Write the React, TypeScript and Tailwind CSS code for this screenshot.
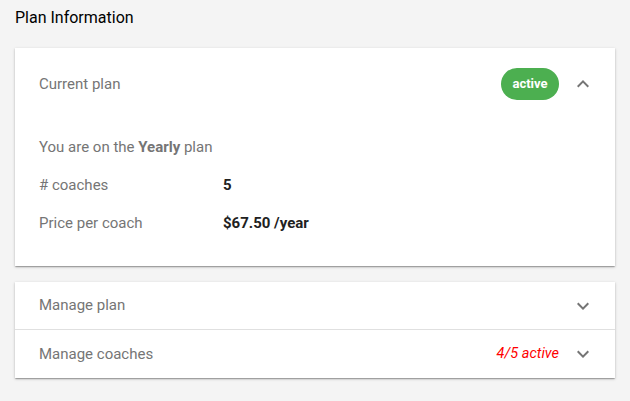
import React from "react";

const Chevron = ({ up }: { up?: boolean }) => (
  <svg width="24" height="24" viewBox="0 0 24 24" className="shrink-0" style={{ transform: up ? "none" : "rotate(180deg)" }}>
    <path d="M12 8l-6 6 1.41 1.41L12 10.83l4.59 4.58L18 14z" fill="#757575" />
  </svg>
);

const card = "bg-white shadow-[0_1px_3px_rgba(0,0,0,0.2),0_1px_1px_rgba(0,0,0,0.14),0_2px_1px_-1px_rgba(0,0,0,0.12)]";

export default function App() {
  return (
    <div className="min-h-[401px] w-[630px] bg-[#f4f4f4] px-[15px] pt-[7px] pb-[23px] text-[15px]" style={{ fontFamily: "Roboto, 'Liberation Sans', sans-serif" }}>
      <h1 className="h-[34px] text-[16px] leading-[20px] text-black pt-[1px]">Plan Information</h1>
      <div className={`${card} mt-[7px]`}>
        <div className="flex h-[72px] items-center pl-[24px] pr-[20px]">
          <div className="flex-1 text-[#757575]">Current plan</div>
          <div className="flex h-[32px] w-[58px] items-center justify-center rounded-full bg-[#4caf50] text-[13px] font-bold text-white">active</div>
          <div className="ml-[12px]"><Chevron up /></div>
        </div>
        <div className="pt-[8px] pb-[24px] px-[24px] text-[#757575]">
          <div className="flex h-[38px] items-center">
            <span>You are on the <b className="font-bold">Yearly</b> plan</span>
          </div>
          <div className="flex h-[38px] items-center">
            <span className="w-[184px]"># coaches</span>
            <span className="font-bold text-[#212121]">5</span>
          </div>
          <div className="flex h-[38px] items-center">
            <span className="w-[184px]">Price per coach</span>
            <span className="font-bold text-[#212121]">$67.50 /year</span>
          </div>
        </div>
      </div>
      <div className={`${card} mt-[16px]`}>
        <div className="flex h-[48px] items-center border-b border-[#e0e0e0] pl-[24px] pr-[20px] text-[#757575]">
          <div className="flex-1">Manage plan</div>
          <Chevron />
        </div>
        <div className="flex h-[48px] items-center pl-[24px] pr-[20px] text-[#757575]">
          <div className="flex-1">Manage coaches</div>
          <span className="text-[14.5px] italic text-[#ff0000]">4/5 active</span>
          <div className="ml-[12px]"><Chevron /></div>
        </div>
      </div>
    </div>
  );
}
